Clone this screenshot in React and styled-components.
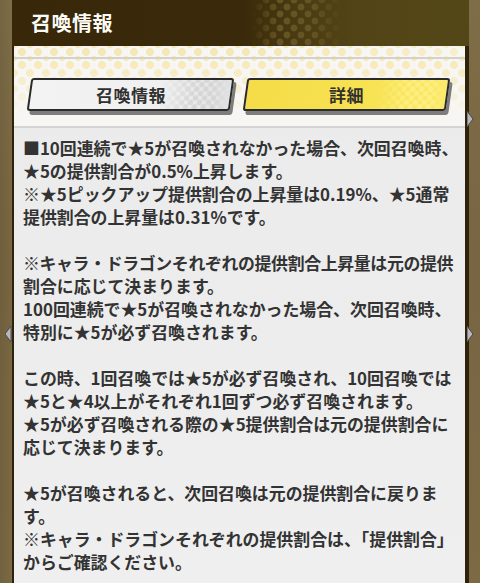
import React from "react";
import styled, { createGlobalStyle } from "styled-components";

const GlobalStyle = createGlobalStyle`
  html, body {
    margin: 0;
    padding: 0;
  }
  body {
    background: #77663f;
    font-family: "Noto Sans CJK JP", "Noto Sans", sans-serif;
  }
`;

const Screen = styled.div`
  position: relative;
  width: 480px;
  height: 583px;
  overflow: hidden;
  display: flex;
  background:
    linear-gradient(90deg, rgba(0, 0, 0, 0.08) 0px, transparent 12px),
    linear-gradient(180deg, #7e6d47 0%, #776641 45%, #7b6a44 100%);
`;

const Frame = styled.div`
  margin-left: 12px;
  width: 457px;
  display: flex;
  flex-direction: column;
  background: #2e220a;
`;

const Header = styled.div`
  position: relative;
  height: 46px;
  flex-shrink: 0;
  display: flex;
  align-items: center;
  padding-left: 19px;
  background: linear-gradient(90deg, #382708 0%, #3a290a 50%, #4a3b12 62%, #524416 75%, #544717 100%);

  &::after {
    content: "";
    position: absolute;
    left: 240px;
    top: 0;
    width: 92px;
    height: 46px;
    background-image: radial-gradient(circle, #665524 0 3.2px, transparent 3.7px),
      radial-gradient(circle, #665524 0 3.2px, transparent 3.7px);
    background-size: 14px 14px;
    background-position: 0 0, 7px 7px;
    -webkit-mask-image: linear-gradient(90deg, transparent 0%, #000 30%, #000 65%, transparent 100%);
    mask-image: linear-gradient(90deg, transparent 0%, #000 30%, #000 65%, transparent 100%);
  }
`;

const Title = styled.h1`
  position: relative;
  z-index: 1;
  margin: 0;
  color: #fbfaf5;
  font-size: 20px;
  font-weight: 700;
  letter-spacing: 0.5px;
  line-height: 1;
`;

const Body = styled.div`
  flex: 1;
  margin: 0 4px 0 2px;
  display: flex;
  flex-direction: column;
  background: linear-gradient(180deg, #ebebeb 0%, #ededed 60%, #efefef 100%);
`;

const Dotted = styled.div`
  position: relative;
  background: #f7f6f2;

  &::before {
    content: "";
    position: absolute;
    inset: 0;
    background-image: radial-gradient(circle, #f6e8b6 0 3.6px, transparent 4.2px),
      radial-gradient(circle, #f6e8b6 0 3.6px, transparent 4.2px);
    background-size: 16px 16px;
    background-position: 0 -2px, 8px 6px;
    -webkit-mask-image: ${(p) => p.$mask};
    mask-image: ${(p) => p.$mask};
  }
`;

const TopStrip = styled(Dotted)`
  height: 11px;
  border-bottom: 2px solid #d2d1cc;
`;

const TabRow = styled(Dotted)`
  height: 48px;
  padding: 19px 0 0 15px;
  display: flex;
  gap: 13px;
  border-bottom: 2px solid #d3d3d3;
`;

const Tab = styled.div`
  position: relative;
  z-index: 1;
  width: 203px;
  height: 33px;
  box-sizing: border-box;
  display: flex;
  align-items: center;
  justify-content: center;
  transform: skewX(-8deg);
  border: 2.5px solid #2b2b2b;
  border-radius: 3px;
  background: ${(p) =>
    p.$active
      ? "linear-gradient(90deg, #f5dc48 0%, #f7e252 60%, #fbea66 100%)"
      : "linear-gradient(90deg, #f3f3f3 0%, #efefef 70%, #e2e2e2 100%)"};
  box-shadow: 3px 4px 0 #7d7d7d;

  &::before {
    content: "";
    position: absolute;
    right: 0;
    top: 0;
    width: 70px;
    height: 100%;
    background-image: radial-gradient(
        circle,
        ${(p) => (p.$active ? "#fdee84" : "#d6d6d6")} 0 2.6px,
        transparent 3.1px
      ),
      radial-gradient(
        circle,
        ${(p) => (p.$active ? "#fdee84" : "#d6d6d6")} 0 2.6px,
        transparent 3.1px
      );
    background-size: 9px 9px;
    background-position: 0 0, 4.5px 4.5px;
    -webkit-mask-image: linear-gradient(90deg, transparent 0%, #000 50%, #000 80%, transparent 100%);
    mask-image: linear-gradient(90deg, transparent 0%, #000 50%, #000 80%, transparent 100%);
  }
`;

const TabLabel = styled.span`
  position: relative;
  transform: skewX(8deg);
  font-size: 17px;
  font-weight: 700;
  color: #303030;
  letter-spacing: 0.5px;
`;

const TextArea = styled.div`
  padding: 8px 0 0 9px;
  font-size: 16.9px;
  font-weight: 700;
  line-height: 23px;
  color: #333;
  white-space: nowrap;
`;

const Line = styled.div`
  height: 23px;
  letter-spacing: ${(p) => (p.$tight ? "-0.35px" : "0")};
`;

const Arrow = styled.svg`
  position: absolute;
  left: ${(p) => p.$x}px;
  top: ${(p) => p.$y}px;
`;

const lines = [
  ["■10回連続で★5が召喚されなかった場合、次回召喚時、"],
  ["★5の提供割合が0.5%上昇します。"],
  ["※★5ピックアップ提供割合の上昇量は0.19%、★5通常"],
  ["提供割合の上昇量は0.31%です。"],
  [""],
  ["※キャラ・ドラゴンそれぞれの提供割合上昇量は元の提供", true],
  ["割合に応じて決まります。"],
  ["100回連続で★5が召喚されなかった場合、次回召喚時、"],
  ["特別に★5が必ず召喚されます。"],
  [""],
  ["この時、1回召喚では★5が必ず召喚され、10回召喚では"],
  ["★5と★4以上がそれぞれ1回ずつ必ず召喚されます。"],
  ["★5が必ず召喚される際の★5提供割合は元の提供割合に"],
  ["応じて決まります。"],
  [""],
  ["★5が召喚されると、次回召喚は元の提供割合に戻りま"],
  ["す。"],
  ["※キャラ・ドラゴンそれぞれの提供割合は、「提供割合」"],
  ["からご確認ください。"],
];

function SideArrow({ x, y, dir }) {
  const d = dir === "left" ? "M6 0 L0 8 L6 16 Z" : "M0 0 L6 8 L0 16 Z";
  return (
    <Arrow $x={x} $y={y} width="7" height="16" viewBox="0 0 7 16">
      <path d={d} fill="#b9b9bd" stroke="#4a4a4a" strokeWidth="1" />
    </Arrow>
  );
}

export default function App() {
  return (
    <>
      <GlobalStyle />
      <Screen>
        <Frame>
          <Header>
            <Title>召喚情報</Title>
          </Header>
          <Body>
            <TopStrip $mask="linear-gradient(90deg, #000 0%, #000 60%, rgba(0,0,0,0.6) 100%)" />
            <TabRow $mask="linear-gradient(180deg, #000 0%, rgba(0,0,0,0.5) 45%, transparent 80%)">
              <Tab>
                <TabLabel>召喚情報</TabLabel>
              </Tab>
              <Tab $active>
                <TabLabel>詳細</TabLabel>
              </Tab>
            </TabRow>
            <TextArea>
              {lines.map(([text, tight], i) => (
                <Line key={i} $tight={tight}>
                  {text}
                </Line>
              ))}
            </TextArea>
          </Body>
        </Frame>
        <SideArrow x={5} y={326} dir="left" />
        <SideArrow x={467} y={326} dir="right" />
        <SideArrow x={467} y={111} dir="right" />
      </Screen>
    </>
  );
}
